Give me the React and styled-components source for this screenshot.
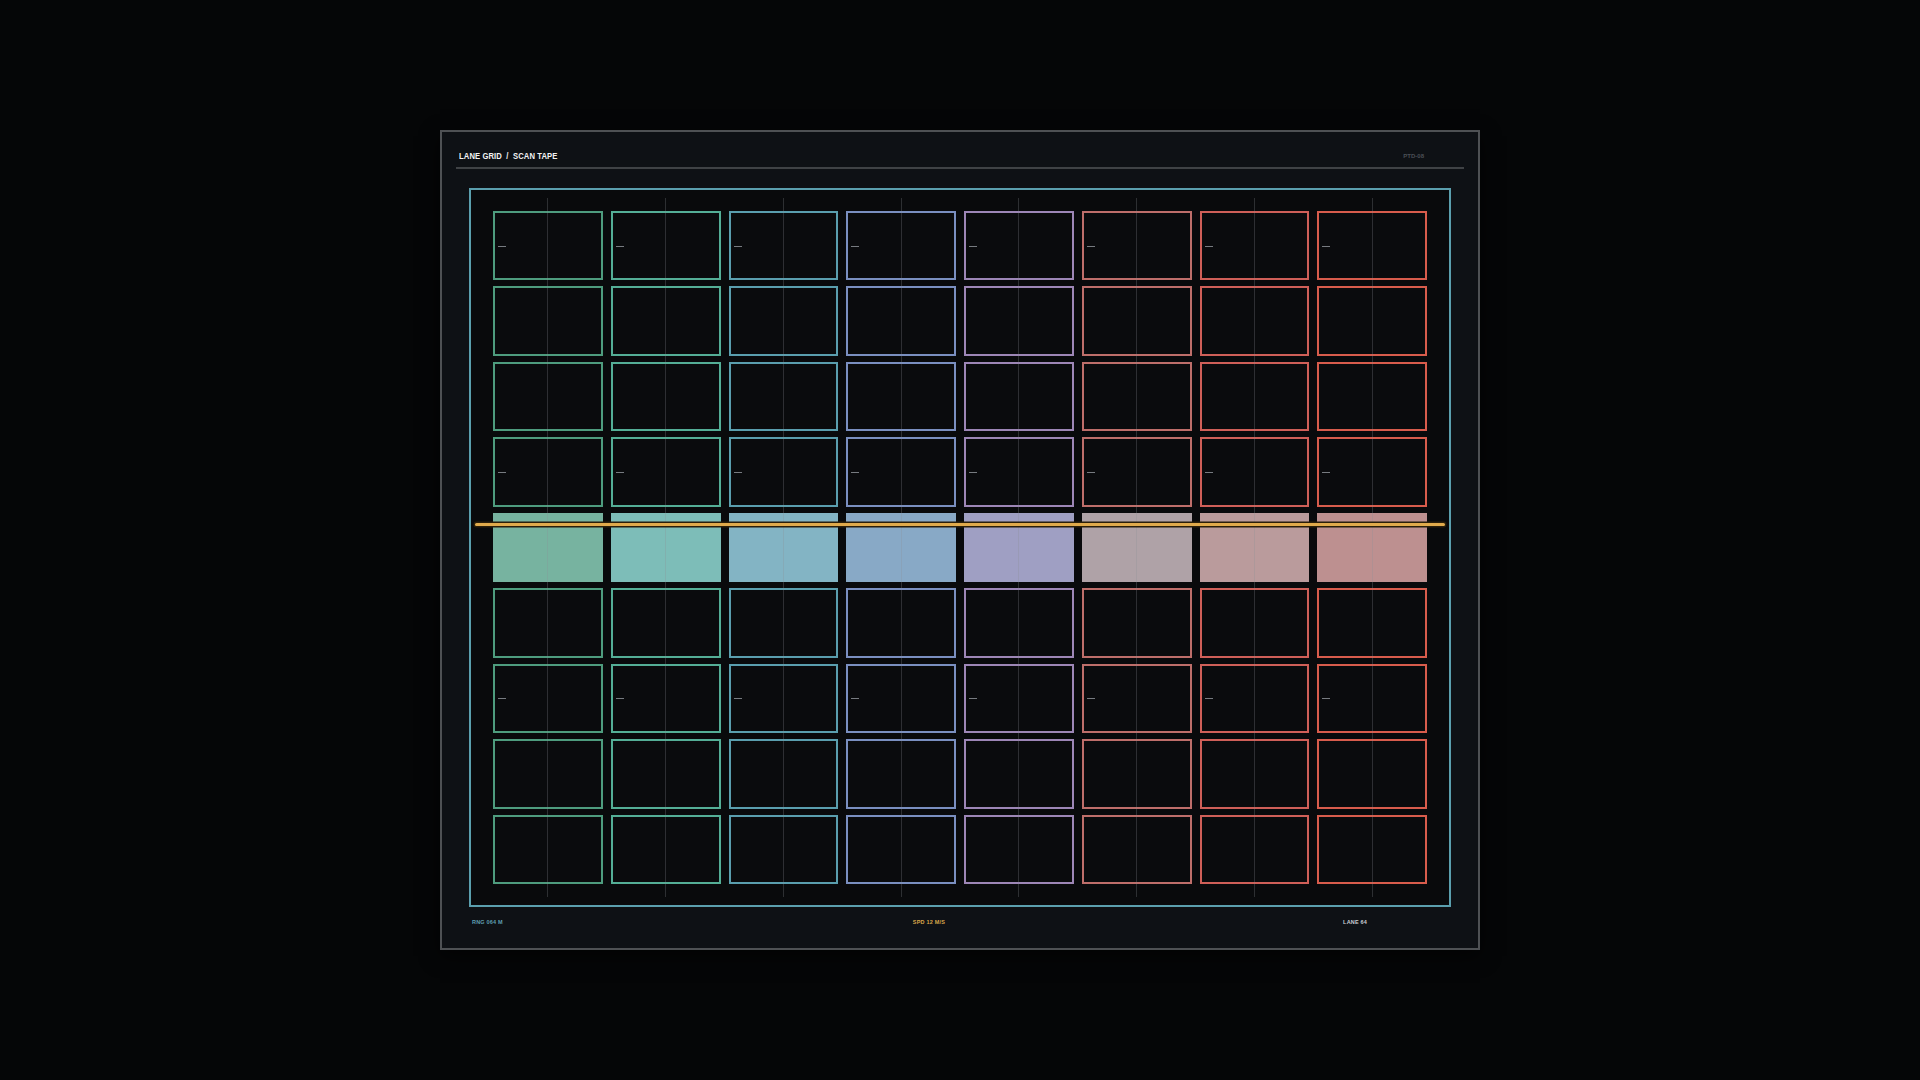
import React from "react";
import styled, { createGlobalStyle } from "styled-components";

const Global = createGlobalStyle`
  html, body { margin: 0; padding: 0; background: #050607; }
  body { width: 1920px; height: 1080px; overflow: hidden; font-family: "Liberation Sans", Arial, sans-serif; }
`;

const Page = styled.div`
  width: 1920px; height: 1080px; display: flex; justify-content: center; align-items: flex-start;
`;
const Frame = styled.div`
  margin-top: 130px; width: 1040px; height: 820px; box-sizing: border-box;
  background: #0e1115; border: 2px solid #4e5154; box-shadow: 0 6px 18px rgba(0,0,0,0.6);
  display: flex; flex-direction: column; padding: 0 14px;
`;
const Header = styled.div`
  height: 29px; display: flex; align-items: flex-end; justify-content: space-between;
  padding: 0 4px 6px 3px; border-bottom: 2px solid #3f4245; margin-bottom: 19px; flex: none;
`;
const Title = styled.div`
  color: #f2f2f2; font-size: 8.5px; font-weight: 700; letter-spacing: 0.1px; transform: scaleX(0.9); transform-origin: left;
`;
const Code = styled.div`
  color: #4a4f55; font-size: 6px; font-weight: 700; margin-right: 36px; margin-bottom: 2px;
`;
const LaneBox = styled.div`
  position: relative; margin: 0 13px; height: 719px; flex: none;
  border: 2px solid #5b9fae; background: #090a0c;
  padding: 21px 22px; box-sizing: border-box;
`;
const Grid = styled.div`
  display: grid; grid-template-columns: repeat(8, 1fr); grid-template-rows: repeat(9, 1fr);
  column-gap: 8px; row-gap: 6.4px; height: 100%;
`;
const Cell = styled.div`
  position: relative; border: 2px solid ${p => p.$c}; background: #0a0b0d; box-sizing: border-box;
`;
const FillCell = styled.div`
  background: ${p => p.$c};
`;
const Tick = styled.div`
  position: absolute; left: 3px; top: 50%; width: 8px; height: 1px; background: #777b80;
`;
const Lanes = styled.div`
  position: absolute; left: 22px; right: 22px; top: 8px; bottom: 8px;
  display: grid; grid-template-columns: repeat(8, 1fr); column-gap: 8px; pointer-events: none;
`;
const LaneLine = styled.div`
  display: flex; justify-content: center;
  &::after { content: ""; width: 1px; height: 100%; background: rgba(140,145,150,0.28); }
`;
const ScanLine = styled.div`
  position: absolute; left: 4px; right: 4px; top: 333px; height: 3px;
  background: #e0aa4c; border-radius: 2px; box-shadow: 0 0 0 1.5px #2a1e0a;
`;
const Footer = styled.div`
  display: flex; align-items: center; height: 30px; padding-left: 16px;
  font-size: 5.5px; font-weight: 700; letter-spacing: 0.2px;
`;
const FootText = styled.span`
  color: ${p => p.$c}; margin-left: ${p => p.$ml || 0}px;
`;

const borders = ["#4e9c7e", "#54ae96", "#5a9eae", "#7a8fc0", "#9d86b6", "#be6e6a", "#cf5f58", "#d85c4c"];
const fills = ["#77b3a0", "#7dbdb8", "#83b4c4", "#88a9c6", "#9f9fc3", "#afa2a7", "#ba9b9c", "#bd9090"];

export default function App() {
  const rows = Array.from({ length: 9 }, (_, r) => r);
  return (
    <Page>
      <Global />
      <Frame>
        <Header>
          <Title>LANE GRID&nbsp;&nbsp;/&nbsp;&nbsp;SCAN TAPE</Title>
          <Code>PTD-08</Code>
        </Header>
        <LaneBox>
          <Grid>
            {rows.map(r =>
              borders.map((c, i) =>
                r === 4 ? (
                  <FillCell key={r + "-" + i} $c={fills[i]} />
                ) : (
                  <Cell key={r + "-" + i} $c={c}>{(r === 0 || r === 3 || r === 6) && <Tick />}</Cell>
                )
              )
            )}
          </Grid>
          <Lanes>{borders.map((c, i) => <LaneLine key={i} />)}</Lanes>
          <ScanLine />
        </LaneBox>
        <Footer>
          <FootText $c="#5f9fb0">RNG 064 M</FootText>
          <FootText $c="#d9a64a" $ml={410}>SPD 12 M/S</FootText>
          <FootText $c="#c8cdd2" $ml={398}>LANE 64</FootText>
        </Footer>
      </Frame>
    </Page>
  );
}
